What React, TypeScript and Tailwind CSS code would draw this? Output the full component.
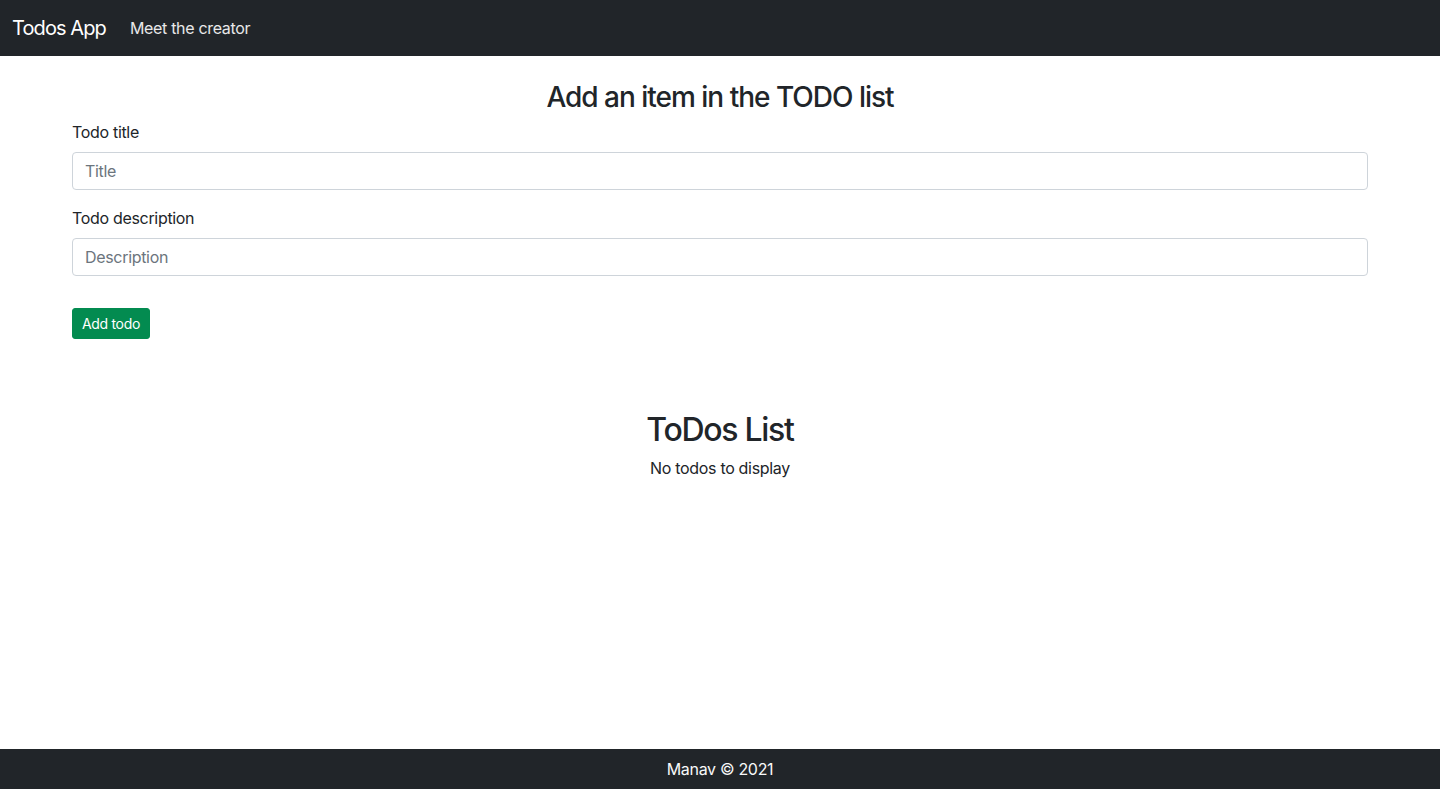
import React from "react";

export default function App() {
  return (
    <div className="min-h-screen flex flex-col bg-white text-[#212529] font-['Inter','Liberation_Sans',sans-serif] tracking-[-0.02em]">
      <nav className="h-[56px] bg-[#212529] flex items-center px-[12px]">
        <a href="#" className="text-[20px] leading-[30px] tracking-[-0.045em] text-white mr-[16px]">
          Todos App
        </a>
        <a href="#" className="px-[8px] text-[16px] leading-[24px] text-white/90">
          Meet the creator
        </a>
      </nav>

      <main className="flex-1 w-full max-w-[1320px] mx-auto px-[12px] pt-[25px]">
        <h3 className="text-center text-[28px] leading-[33.6px] tracking-[-0.036em] font-medium mb-[5px]">
          Add an item in the TODO list
        </h3>
        <form onSubmit={(e) => e.preventDefault()}>
          <div className="mb-[16px]">
            <label className="block text-[16px] leading-[24px] mb-[8px]">Todo title</label>
            <input
              type="text"
              placeholder="Title"
              className="block w-full h-[38px] px-[12px] text-[16px] border border-[#ced4da] rounded-[4px] placeholder:text-[#6c757d] outline-none"
            />
          </div>
          <div className="mb-[32px]">
            <label className="block text-[16px] leading-[24px] mb-[8px]">Todo description</label>
            <input
              type="text"
              placeholder="Description"
              className="block w-full h-[38px] px-[12px] text-[16px] border border-[#ced4da] rounded-[4px] placeholder:text-[#6c757d] outline-none"
            />
          </div>
          <button
            type="submit"
            className="h-[31px] px-[9px] text-[14px] leading-[21px] text-white bg-[#038b50] border border-[#038b50] rounded-[3px]"
          >
            Add todo
          </button>
        </form>

        <div className="mt-[72px] text-center">
          <h2 className="text-[32px] leading-[38.4px] tracking-[-0.04em] font-medium mb-[7px]">ToDos List</h2>
          <p className="text-[16px] leading-[24px]">No todos to display</p>
        </div>
      </main>

      <footer className="h-[40px] bg-[#212529] flex items-center justify-center text-[16px] text-[#f8f9fa]">
        Manav © 2021
      </footer>
    </div>
  );
}
